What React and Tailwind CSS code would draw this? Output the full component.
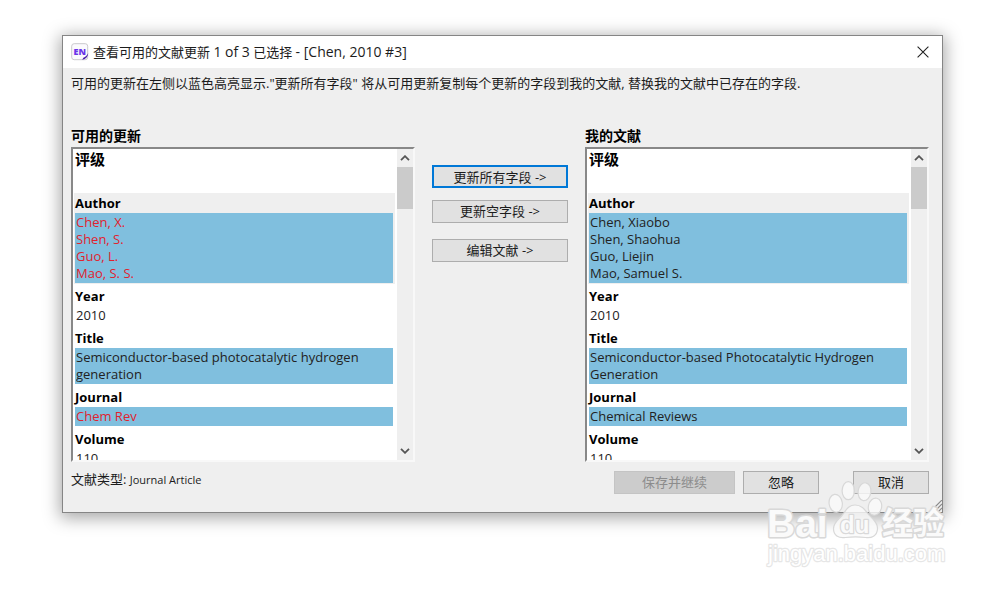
import { useId } from 'react'
import clsx from 'clsx'

const updates = [
  { label: 'Author', lines: ['Chen, X.', 'Shen, S.', 'Guo, L.', 'Mao, S. S.'], marked: true, red: true, active: true },
  { label: 'Year', lines: ['2010'] },
  { label: 'Title', lines: ['Semiconductor-based photocatalytic hydrogen', 'generation'], marked: true },
  { label: 'Journal', lines: ['Chem Rev'], marked: true, red: true },
  { label: 'Volume', lines: ['110'] },
]

const reference = [
  { label: 'Author', lines: ['Chen, Xiaobo', 'Shen, Shaohua', 'Guo, Liejin', 'Mao, Samuel S.'], marked: true, active: true },
  { label: 'Year', lines: ['2010'] },
  { label: 'Title', lines: ['Semiconductor-based Photocatalytic Hydrogen', 'Generation'], marked: true },
  { label: 'Journal', lines: ['Chemical Reviews'], marked: true },
  { label: 'Volume', lines: ['110'] },
]

function Button({ children, className, ...props }) {
  return (
    <button
      type="button"
      className={clsx(
        'flex h-[23px] justify-center border text-[13px] leading-5 whitespace-nowrap',
        'disabled:border-[#c4c4c4] disabled:bg-[#cccccc] disabled:text-[#8c8c8c]',
        className
      )}
      {...props}
    >
      {children}
    </button>
  )
}

function Scrollbar() {
  return (
    <div className="flex w-4 shrink-0 flex-col bg-[#efefef]">
      <button type="button" aria-label="Scroll up" className="flex h-[18px] items-center justify-center">
        <svg className="h-[6px] w-[10px]" viewBox="0 0 10 6" fill="none" stroke="#555" strokeWidth="1.8">
          <path d="M1 5.2 5 1.2 9 5.2" />
        </svg>
      </button>
      <div className="h-[42px] bg-[#cbcbcb]" />
      <button type="button" aria-label="Scroll down" className="mt-auto flex h-[18px] items-center justify-center">
        <svg className="h-[6px] w-[10px]" viewBox="0 0 10 6" fill="none" stroke="#555" strokeWidth="1.8">
          <path d="M1 .8 5 4.8 9 .8" />
        </svg>
      </button>
    </div>
  )
}

function Field({ field }) {
  return (
    <div className={clsx('mb-[2px] pb-px pl-px pr-[2px]', field.active && 'bg-[#efefef]')}>
      <dt className="text-[13px] font-bold leading-5 text-black">{field.label}</dt>
      <dd
        className={clsx(
          'px-px py-px text-[13px] leading-[17px]',
          field.marked && 'bg-[#80bfde]',
          field.red ? 'text-[#e0222e]' : 'text-[#222]'
        )}
      >
        {field.lines.map((line) => (
          <div key={line} className="truncate">{line}</div>
        ))}
      </dd>
    </div>
  )
}

function ReferencePanel({ title, fields }) {
  const id = useId()

  return (
    <section aria-labelledby={id} className="min-w-0">
      <h2 id={id} className="mb-px text-sm font-bold leading-5 text-black">{title}</h2>
      <div className="flex h-[315px] overflow-hidden border-2 border-t-[#888] border-r-[#f8f8f8] border-b-[#f8f8f8] border-l-[#888] bg-white">
        <dl className="min-w-0 flex-1 overflow-hidden pl-px pr-[2px]">
          <div className="h-11 pl-px">
            <dt className="text-[15px] font-bold leading-5 text-black">评级</dt>
          </div>
          {fields.map((field) => (
            <Field key={field.label} field={field} />
          ))}
        </dl>
        <Scrollbar />
      </div>
    </section>
  )
}

function AppIcon() {
  return (
    <svg className="h-[18px] w-[18px] shrink-0" viewBox="0 0 18 18">
      <rect x="0.7" y="0.7" width="16" height="16" rx="2.5" fill="#fbfafd" stroke="#c9c8cc" />
      <text x="2.6" y="11.5" fontSize="9" fontWeight="800" fill="#6a35e8" fontFamily="Open Sans, sans-serif">EN</text>
      <path d="M17.2 10c-.2 3.800-2.100 6-6 6.800l1.200-2c2.200-.8 3.500-2.300 4.800-4.800Z" fill="#4a1fa8" />
    </svg>
  )
}

function Watermark() {
  return (
    <svg
      className="pointer-events-none absolute -right-[7px] -bottom-[57px] h-[92px] w-[190px]"
      viewBox="0 0 190 92"
      fill="#fafafa"
      fillOpacity="0.8"
      stroke="#d8d8d8"
      strokeWidth="1.2"
      strokeLinejoin="round"
      fontFamily="Liberation Sans, Noto Sans CJK SC, sans-serif"
    >
      <g fontWeight="bold" strokeWidth="3" fillOpacity="1" paintOrder="stroke">
        <text x="8" y="60" fontSize="39">Bai</text>
        <text x="123" y="57" fontSize="31">经验</text>
      </g>
      <ellipse cx="76.7" cy="26.3" rx="6.6" ry="9" transform="rotate(-8 76.7 26.3)" />
      <ellipse cx="89.3" cy="13.7" rx="6.2" ry="9" />
      <ellipse cx="105.5" cy="14.7" rx="6.4" ry="9" transform="rotate(8 105.5 14.7)" />
      <ellipse cx="116" cy="29.7" rx="6.6" ry="8.6" transform="rotate(12 116 29.7)" />
      <path d="M96 28c7 0 10 5 14 10 4 4 9 8 8.500 14-.5 7-6 9.500-12 8.500-7-1-13-1-20 0-7 1-12-2-12-9 0-6 5-9 8.500-13 4-5 6-10.500 13-10.500Z" />
      <text x="81" y="56" fontSize="24" fontWeight="bold" strokeWidth="2.4" fillOpacity="1" paintOrder="stroke">du</text>
      <text x="9" y="84" fontSize="22" stroke="#e6e6e6" strokeWidth="2.4" fill="#fff" fillOpacity="1" paintOrder="stroke">jingyan.baidu.com</text>
    </svg>
  )
}

export default function App() {
  return (
    <div className="min-h-screen overflow-hidden bg-white pt-[35px] pr-[57px] pb-[76px] pl-[62px] font-['Open_Sans','Noto_Sans_CJK_SC',sans-serif] text-[#1c1c1c]">
      <main className="relative border border-[#858585] bg-[#efefef] shadow-[0_3px_16px_2px_rgba(0,0,0,0.35)]">
        <header className="flex h-8 items-center gap-1 bg-white pl-2 pr-3">
          <AppIcon />
          <h1 className="flex-1 truncate text-[13px] leading-5">
            查看可用的文献更新 <span className="text-sm leading-5">1 of 3</span> 已选择{' '}
            <span className="text-sm leading-5">- [Chen, 2010 #3]</span>
          </h1>
          <button type="button" aria-label="Close" className="p-px">
            <svg className="h-3 w-3" viewBox="0 0 12 12" fill="none" stroke="#222" strokeWidth="1.1">
              <path d="M.6.6 11.400 11.400M11.400.6.6 11.400" />
            </svg>
          </button>
        </header>

        <div className="pt-[5px] pr-[13px] pb-[18px] pl-2">
          <p className="text-[13px] leading-5">
            可用的更新在左侧以蓝色高亮显示."更新所有字段" 将从可用更新复制每个更新的字段到我的文献, 替换我的文献中已存在的字段.
          </p>

          <div className="mt-[33px] grid grid-cols-[1fr_136px_1fr] gap-x-[17px]">
            <ReferencePanel title="可用的更新" fields={updates} />
            <div className="flex flex-col gap-3 pt-[39px]">
              <Button className="border-2 border-[#0078d7] bg-[#e1e1e1]">更新所有字段 -&gt;</Button>
              <Button className="border-[#adadad] bg-[#e1e1e1]">更新空字段 -&gt;</Button>
              <Button className="mt-1 border-[#adadad] bg-[#e1e1e1]">编辑文献 -&gt;</Button>
            </div>
            <ReferencePanel title="我的文献" fields={reference} />
          </div>

          <footer className="mt-[9px] flex items-start">
            <p className="flex-1 text-[13px] leading-4">
              文献类型: <span className="text-[11px] leading-4">Journal Article</span>
            </p>
            <Button disabled className="w-[121px]">保存并继续</Button>
            <Button className="ml-2 w-[76px] border-[#adadad] bg-[#e1e1e1]">忽略</Button>
            <Button className="ml-[34px] w-[76px] border-[#adadad] bg-[#e1e1e1]">取消</Button>
          </footer>
        </div>

        <svg className="absolute right-0 bottom-0 h-3 w-3" viewBox="0 0 12 12" stroke="#8a8a8a" strokeWidth="1.2">
          <path d="M0 12 12 0M4 12 12 4M8 12 12 8" />
        </svg>
        <Watermark />
      </main>
    </div>
  )
}
